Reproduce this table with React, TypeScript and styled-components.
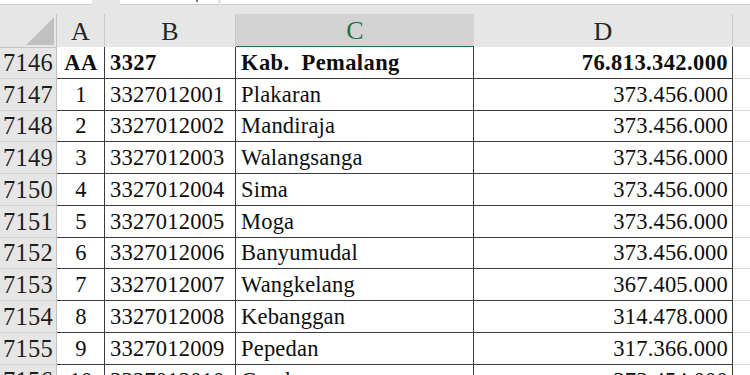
import React from 'react';
import styled, { createGlobalStyle, css } from 'styled-components';

const Global = createGlobalStyle`
  html, body { margin: 0; padding: 0; background: #e6e6e6; overflow: hidden; }
  body { font-family: "Liberation Serif", "Times New Roman", serif; }
`;

const COLS = '57px 48px 131px 238px 259px 1fr';

const Page = styled.div`
  width: 750px;
  height: 375px;
  overflow: hidden;
  background: #e6e6e6;
  display: flex;
  flex-direction: column;
`;

const TopStrip = styled.div`
  height: 5px;
  display: flex;
  flex-shrink: 0;
`;

const TopBox = styled.div<{ $w: string; $ml?: number }>`
  box-sizing: border-box;
  height: 5px;
  flex: ${(p) => (p.$w === 'fill' ? '1' : `0 0 ${p.$w}`)};
  margin-left: ${(p) => p.$ml ?? 0}px;
  background: #ffffff;
  border-bottom: 1px solid #cdcdcd;
  position: relative;
`;

const Dot = styled.span`
  position: absolute;
  left: 76px;
  top: 0;
  width: 2px;
  height: 2px;
  background: #7a7a7a;
`;

const Gap = styled.div`
  height: 9px;
  flex-shrink: 0;
`;

const Sheet = styled.div`
  display: flex;
  flex-direction: column;
  background: #ffffff;
`;

const Row = styled.div<{ $h: string }>`
  display: grid;
  grid-template-columns: ${COLS};
  height: ${(p) => p.$h};
  flex-shrink: 0;
`;

const Corner = styled.div`
  box-sizing: border-box;
  background: #e6e6e6;
  border-right: 1px solid #c4c4c4;
  border-bottom: 1px solid #c4c4c4;
  position: relative;
`;

const Triangle = styled.div`
  position: absolute;
  right: 2px;
  bottom: 2px;
  width: 0;
  height: 0;
  border-left: 28px solid transparent;
  border-bottom: 28px solid #c1c1c1;
`;

const ColHead = styled.div<{ $active?: boolean; $last?: boolean }>`
  box-sizing: border-box;
  display: flex;
  align-items: center;
  justify-content: center;
  font-size: 26px;
  padding-top: 2px;
  color: #262626;
  background: #e6e6e6;
  border-right: 1px solid #c9c9c9;
  border-bottom: 1px solid #bdbdbd;
  ${(p) =>
    p.$active &&
    css`
      background: #d3d3d3;
      color: #217346;
      border-right: none;
      border-bottom: 2px solid #217346;
    `}
  ${(p) => p.$last && css`border-right: none;`}
`;

const RowHead = styled.div`
  box-sizing: border-box;
  display: flex;
  align-items: center;
  justify-content: center;
  font-size: 24.5px;
  letter-spacing: 0.3px;
  color: #1e1e1e;
  background: #e6e6e6;
  border-right: 1px solid #bfbfbf;
  border-bottom: 1px solid #d2d2d2;
  padding-top: 1px;
`;

const Cell = styled.div<{ $align: 'left' | 'center' | 'right'; $bold?: boolean }>`
  box-sizing: border-box;
  display: flex;
  align-items: center;
  justify-content: ${(p) =>
    p.$align === 'left' ? 'flex-start' : p.$align === 'right' ? 'flex-end' : 'center'};
  padding: 1px 4px 0 5px;
  font-size: 22.5px;
  white-space: pre;
  overflow: hidden;
  color: #0d0d0d;
  background: #ffffff;
  border-right: 1px solid #3c3c3c;
  border-bottom: 1px solid #3c3c3c;
  letter-spacing: ${(p) => (p.$bold ? '0.4px' : '0.2px')};
  font-weight: ${(p) => (p.$bold ? 700 : 400)};
`;

const EmptyCell = styled.div`
  box-sizing: border-box;
  background: #ffffff;
  border-bottom: 1px solid #dadada;
`;

type Rec = { n: number; a: string; b: string; c: string; d: string; bold?: boolean };

const rows: Rec[] = [
  { n: 7146, a: 'AA', b: '3327', c: 'Kab.  Pemalang', d: '76.813.342.000', bold: true },
  { n: 7147, a: '1', b: '3327012001', c: 'Plakaran', d: '373.456.000' },
  { n: 7148, a: '2', b: '3327012002', c: 'Mandiraja', d: '373.456.000' },
  { n: 7149, a: '3', b: '3327012003', c: 'Walangsanga', d: '373.456.000' },
  { n: 7150, a: '4', b: '3327012004', c: 'Sima', d: '373.456.000' },
  { n: 7151, a: '5', b: '3327012005', c: 'Moga', d: '373.456.000' },
  { n: 7152, a: '6', b: '3327012006', c: 'Banyumudal', d: '373.456.000' },
  { n: 7153, a: '7', b: '3327012007', c: 'Wangkelang', d: '367.405.000' },
  { n: 7154, a: '8', b: '3327012008', c: 'Kebanggan', d: '314.478.000' },
  { n: 7155, a: '9', b: '3327012009', c: 'Pepedan', d: '317.366.000' },
  { n: 7156, a: '10', b: '3327012010', c: 'Gendoang', d: '373.454.000' },
];

export default function App() {
  return (
    <Page>
      <Global />
      <TopStrip>
        <TopBox $w="92px" />
        <TopBox $w="98px" $ml={28}>
          <Dot />
        </TopBox>
        <TopBox $w="fill" $ml={3} />
      </TopStrip>
      <Gap />
      <Sheet>
        <Row $h="33px">
          <Corner>
            <Triangle />
          </Corner>
          <ColHead>A</ColHead>
          <ColHead>B</ColHead>
          <ColHead $active>C</ColHead>
          <ColHead>D</ColHead>
          <ColHead $last />
        </Row>
        {rows.map((r) => (
          <Row $h="31.78px" key={r.n}>
            <RowHead>{r.n}</RowHead>
            <Cell $align="center" $bold={r.bold}>{r.a}</Cell>
            <Cell $align="left" $bold={r.bold}>{r.b}</Cell>
            <Cell $align="left" $bold={r.bold}>{r.c}</Cell>
            <Cell $align="right" $bold={r.bold}>{r.d}</Cell>
            <EmptyCell />
          </Row>
        ))}
      </Sheet>
    </Page>
  );
}
